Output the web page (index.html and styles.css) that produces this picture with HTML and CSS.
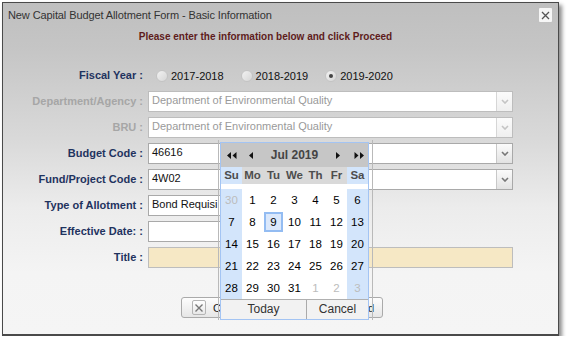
FILE: index.html
```
<!DOCTYPE html>
<html lang="en">
<head>
    <meta charset="UTF-8">
    <title>New Capital Budget Allotment Form</title>
    <link rel="stylesheet" href="styles.css">
</head>
<body>
    <div class="dialog">
        <div class="titlebar">
            <span class="title">New Capital Budget Allotment Form - Basic Information</span>
            <span class="close">
                <svg width="9" height="9" viewBox="0 0 9 9"><path d="M1 1 L8 8 M8 1 L1 8" stroke="#555" stroke-width="1.3" fill="none"/></svg>
            </span>
        </div>
        <div class="intro">Please enter the information below and click Proceed</div>

        <div class="form">
            <div class="label">Fiscal Year :</div>
            <div class="radios">
                <label class="radio-item"><span class="radio"></span>2017-2018</label>
                <label class="radio-item"><span class="radio"></span>2018-2019</label>
                <label class="radio-item"><span class="radio checked"></span>2019-2020</label>
            </div>

            <div class="label disabled">Department/Agency :</div>
            <div class="select disabled">
                <span class="value">Department of Environmental Quality</span>
                <span class="arrow"><svg width="8" height="5" viewBox="0 0 8 5"><path d="M1 1 L4 4 L7 1" stroke="#c4c4c4" stroke-width="1.6" fill="none"/></svg></span>
            </div>

            <div class="label disabled">BRU :</div>
            <div class="select disabled">
                <span class="value">Department of Environmental Quality</span>
                <span class="arrow"><svg width="8" height="5" viewBox="0 0 8 5"><path d="M1 1 L4 4 L7 1" stroke="#c4c4c4" stroke-width="1.6" fill="none"/></svg></span>
            </div>

            <div class="label">Budget Code :</div>
            <div class="select">
                <span class="value">46616</span>
                <span class="arrow"><svg width="8" height="5" viewBox="0 0 8 5"><path d="M1 1 L4 4 L7 1" stroke="#777" stroke-width="1.6" fill="none"/></svg></span>
            </div>

            <div class="label">Fund/Project Code :</div>
            <div class="select">
                <span class="value">4W02</span>
                <span class="arrow"><svg width="8" height="5" viewBox="0 0 8 5"><path d="M1 1 L4 4 L7 1" stroke="#777" stroke-width="1.6" fill="none"/></svg></span>
            </div>

            <div class="label">Type of Allotment :</div>
            <div class="field short"><span class="value">Bond Requisi</span></div>

            <div class="label">Effective Date: :</div>
            <div class="field short"></div>

            <div class="label">Title :</div>
            <div class="field title-field"></div>
        </div>

        <div class="buttons">
            <button class="btn">
                <span class="btn-icon"><svg width="10" height="10" viewBox="0 0 10 10"><path d="M1.5 1.5 L8.5 8.5 M8.5 1.5 L1.5 8.5" stroke="#777" stroke-width="1.4" fill="none"/></svg></span>
                <span class="btn-text">C</span>
            </button>
            <button class="btn right">
                <span class="btn-text">d</span>
            </button>
        </div>

        <div class="cal-frame"></div>
        <div class="calendar">
            <div class="cal-head">
                <span class="nav">
                    <svg width="10" height="7" viewBox="0 0 10 7"><path d="M4 0 L0 3.5 L4 7 Z M9.5 0 L5.5 3.5 L9.5 7 Z" fill="#111"/></svg>
                </span>
                <span class="nav">
                    <svg width="4" height="7" viewBox="0 0 4 7"><path d="M4 0 L0 3.5 L4 7 Z" fill="#111"/></svg>
                </span>
                <span class="month">Jul 2019</span>
                <span class="nav">
                    <svg width="4" height="7" viewBox="0 0 4 7"><path d="M0 0 L4 3.5 L0 7 Z" fill="#111"/></svg>
                </span>
                <span class="nav">
                    <svg width="10" height="7" viewBox="0 0 10 7"><path d="M0.5 0 L4.5 3.5 L0.5 7 Z M6 0 L10 3.5 L6 7 Z" fill="#111"/></svg>
                </span>
            </div>
            <div class="cal-grid">
                <span class="dn we">Su</span><span class="dn">Mo</span><span class="dn">Tu</span><span class="dn">We</span><span class="dn">Th</span><span class="dn">Fr</span><span class="dn we">Sa</span>

                <span class="d we other">30</span><span class="d">1</span><span class="d">2</span><span class="d">3</span><span class="d">4</span><span class="d">5</span><span class="d we">6</span>
                <span class="d we">7</span><span class="d">8</span><span class="d"><span class="sel">9</span></span><span class="d">10</span><span class="d">11</span><span class="d">12</span><span class="d we">13</span>
                <span class="d we">14</span><span class="d">15</span><span class="d">16</span><span class="d">17</span><span class="d">18</span><span class="d">19</span><span class="d we">20</span>
                <span class="d we">21</span><span class="d">22</span><span class="d">23</span><span class="d">24</span><span class="d">25</span><span class="d">26</span><span class="d we">27</span>
                <span class="d we">28</span><span class="d">29</span><span class="d">30</span><span class="d">31</span><span class="d other">1</span><span class="d other">2</span><span class="d we other">3</span>
            </div>
            <div class="cal-foot">
                <span class="foot-btn today">Today</span>
                <span class="foot-btn">Cancel</span>
            </div>
        </div>
    </div>
</body>
</html>
```

FILE: styles.css
```
body {
    margin: 0;
    background-color: #fff;
    font-family: 'Liberation Sans', Arial, sans-serif;
    font-size: 11px;
    color: #111;
}
.dialog {
    position: relative;
    box-sizing: border-box;
    width: 557px;
    height: 334px;
    margin: 2px 0 0 2px;
    border: 1px solid #4a4a4a;
    border-bottom-width: 2px;
    background: linear-gradient(to bottom, #bfbfbf 0px, #c5c5c5 45px, #dadada 140px, #ececec 205px, #f4f4f4 270px, #f5f5f5 100%);
    box-shadow: 3px 3px 4px rgba(0, 0, 0, 0.45);
}
.titlebar {
    display: flex;
    justify-content: space-between;
    align-items: center;
    height: 24px;
    padding: 0 5px;
}
.title {
    color: #333;
    letter-spacing: -0.1px;
}
.close {
    display: flex;
    justify-content: center;
    align-items: center;
    width: 13px;
    height: 14px;
    margin-right: 1px;
    background-color: #f6f6f6;
    border-radius: 1px;
}
.intro {
    margin-top: 2px;
    line-height: 16px;
    text-align: center;
    font-weight: bold;
    font-size: 10px;
    color: #5e1c1c;
    padding-right: 30px;
}
.form {
    display: grid;
    grid-template-columns: 140px 365px;
    column-gap: 5px;
    row-gap: 5px;
    margin-top: 20px;
}
.label {
    height: 21px;
    line-height: 21px;
    text-align: right;
    font-weight: bold;
    color: #1f335f;
}
.label.disabled {
    color: #a6a6a6;
}
.radios {
    display: flex;
    align-items: center;
    gap: 17px;
    padding-left: 8px;
    color: #111;
}
.radio-item {
    display: flex;
    align-items: center;
    gap: 3px;
}
.radio {
    box-sizing: border-box;
    width: 12px;
    height: 12px;
    border-radius: 50%;
    border: 1px solid #c4c4c4;
    background: linear-gradient(135deg, #f2f2f2, #d6d6d6);
    display: flex;
    justify-content: center;
    align-items: center;
}
.radio.checked::after {
    content: "";
    width: 4px;
    height: 4px;
    border-radius: 50%;
    background-color: #444;
}
.select,
.field {
    box-sizing: border-box;
    height: 21px;
    display: flex;
    border: 1px solid #a9a9a9;
    background-color: #fff;
}
.select.disabled {
    border-color: #bdbdbd;
}
.value {
    flex: 1;
    padding: 1px 3px 0;
    line-height: 15px;
    white-space: nowrap;
    overflow: hidden;
    color: #111;
}
.select.disabled .value {
    color: #9a9a9a;
}
.arrow {
    width: 15px;
    display: flex;
    justify-content: center;
    align-items: center;
    border-left: 1px solid #c8c8c8;
    background: linear-gradient(to bottom, #fbfbfb, #e2e2e2);
}
.select.disabled .arrow {
    background: linear-gradient(to bottom, #fbfbfb, #efefef);
    border-left-color: #d6d6d6;
}
.field.short {
    width: 200px;
}
.title-field {
    background-color: #f6e8c5;
    border-color: #bdbdbd;
}
.buttons {
    display: flex;
    gap: 0;
    margin-top: 29px;
    padding-left: 178px;
}
.btn {
    box-sizing: border-box;
    height: 21px;
    width: 90px;
    display: flex;
    align-items: center;
    gap: 7px;
    padding: 0 8px 0 10px;
    border: 1px solid #aaa;
    border-radius: 3px;
    background: linear-gradient(to bottom, #fdfdfd, #e6e6e6);
    font-family: 'Liberation Sans', Arial, sans-serif;
    font-size: 11px;
    color: #222;
}
.btn.right {
    width: 100px;
    margin-left: 12px;
    justify-content: flex-end;
}
.btn-icon {
    box-sizing: border-box;
    width: 14px;
    height: 15px;
    display: flex;
    justify-content: center;
    align-items: center;
    border: 1px solid #b5b5b5;
    border-radius: 2px;
    background: linear-gradient(to bottom, #fff, #e8e8e8);
}
.cal-frame {
    position: absolute;
    left: 215px;
    top: 137px;
    width: 155px;
    height: 180px;
    box-sizing: border-box;
    border-left: 1px solid #b9b9b9;
    border-right: 1px solid #b9b9b9;
}
.calendar {
    position: absolute;
    left: 217px;
    top: 139px;
    width: 149px;
    box-sizing: border-box;
    border: 1px solid #a3c4f3;
    background-color: #fff;
}
.cal-head {
    display: flex;
    align-items: center;
    height: 24px;
    background-color: #c6c6c6;
    padding: 0 4px 0 6px;
}
.nav {
    display: flex;
    align-items: center;
}
.nav:nth-child(2) {
    margin-left: 12px;
}
.nav:nth-child(4) {
    margin-right: 14px;
}
.month {
    flex: 1;
    text-align: center;
    font-weight: bold;
    font-size: 12px;
    color: #444;
}
.cal-grid {
    display: grid;
    grid-template-columns: repeat(7, 21px);
    grid-auto-rows: 22px;
}
.dn {
    height: 17px;
    line-height: 17px;
    text-align: center;
    font-weight: bold;
    color: #4d4d4d;
    background-color: #d9d9d9;
    font-size: 11.5px;
}
.dn.we {
    background-color: #d3e5fb;
}
.d {
    display: flex;
    justify-content: center;
    align-items: center;
    color: #000;
    font-size: 11.5px;
}
.d.we {
    background-color: #d3e5fb;
}
.d.other {
    color: #bcbcbc;
}
.sel {
    box-sizing: border-box;
    width: 19px;
    height: 20px;
    display: flex;
    justify-content: center;
    align-items: center;
    border: 2px solid #93bcf2;
    background-color: #dbe8fb;
}
.cal-foot {
    display: flex;
    height: 19px;
    border-top: 1px solid #b0b0b0;
    background-color: #f2f2f2;
}
.foot-btn {
    flex: 1;
    text-align: center;
    line-height: 19px;
    color: #333;
    font-size: 12px;
}
.foot-btn.today {
    flex: 0 0 85px;
    border-right: 1px solid #aaa;
}
```
